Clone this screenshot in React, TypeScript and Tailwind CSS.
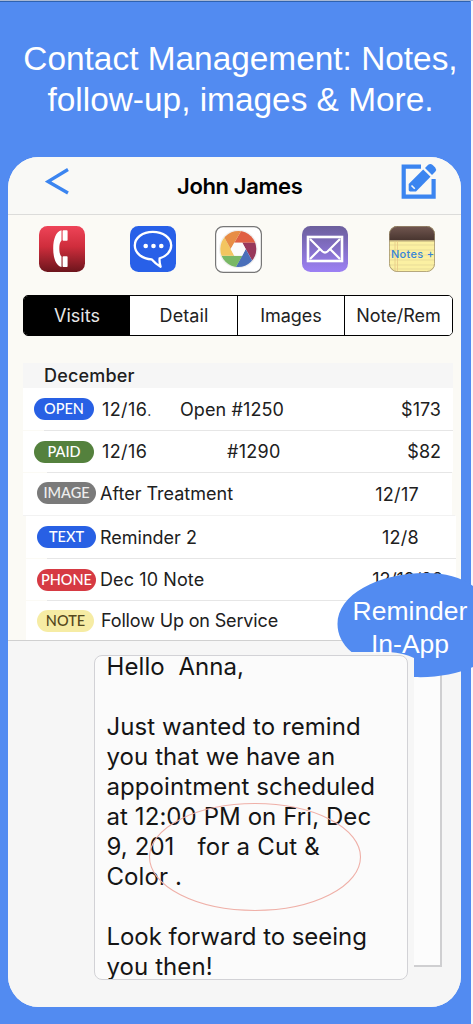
import React from 'react';

const tabs = [
  { label: 'Visits', className: 'w-[106px] bg-black text-[#e8e8e8]' },
  { label: 'Detail', className: 'w-[107px] bg-white pl-px text-[#222] tracking-[0.1px]' },
  { label: 'Images', className: 'w-[107px] bg-white text-[#222] border-l-[1.5px] border-black' },
  { label: 'Note/Rem', className: 'flex-1 bg-white text-[#222] border-l-[1.5px] border-black' },
];

const PhoneIcon = () => (
  <svg width="46" height="46" viewBox="0 0 46 46">
    <defs>
      <linearGradient id="phone" x1="0" y1="0" x2="0" y2="1">
        <stop offset="0" stopColor="#ee4458" />
        <stop offset="0.45" stopColor="#cf2d3c" />
        <stop offset="1" stopColor="#6c151c" />
      </linearGradient>
    </defs>
    <rect width="46" height="46" rx="8.5" fill="url(#phone)" />
    <path d="M22.5 4.2C17 5.5 14.2 13 14.2 22.5S17 39.8 22.5 41V30.5C20.8 29 20.3 26 20.3 22.5S20.8 16 22.5 14.5Z" fill="#fff" />
    <rect x="23.6" y="4.2" width="5" height="10.5" rx="0.8" fill="#fff" />
    <rect x="23.6" y="30.3" width="5" height="10.7" rx="0.8" fill="#fff" />
  </svg>
);

const ChatIcon = () => (
  <svg width="46" height="46" viewBox="0 0 46 46">
    <rect width="46" height="46" rx="8.5" fill="#2860e8" />
    <path
      d="M22.8 5.8C12.6 5.8 4.8 11.8 4.8 19.6S12.5 33 21.6 33.3C24.5 36.7 27.5 39 30.6 40.7C29.6 38 29.4 35 29.6 32.4C36.2 30.6 41.2 25.6 41.2 19.6C41.2 11.8 33 5.8 22.8 5.8Z"
      fill="none"
      stroke="#fff"
      strokeWidth="2.3"
      strokeLinejoin="round"
    />
    <circle cx="15.7" cy="20" r="2.3" fill="#fff" />
    <circle cx="23.5" cy="20" r="2.3" fill="#fff" />
    <circle cx="31.3" cy="20" r="2.3" fill="#fff" />
  </svg>
);

const PhotosIcon = () => (
  <svg width="47" height="47" viewBox="0 0 47 47">
    <defs>
      <clipPath id="wheel">
        <circle cx="23.3" cy="23" r="18" />
      </clipPath>
    </defs>
    <rect x="0.6" y="0.6" width="45.8" height="45.8" rx="7.5" fill="#fff" stroke="#777" strokeWidth="1.2" />
    <circle cx="23.3" cy="23" r="19.3" fill="#f0f0f0" />
    <g clipPath="url(#wheel)">
      <path d="M19.3 16.7L29 0H47V16.7Z" fill="#e05f43" />
      <path d="M27.3 16.7H47V45H43L30.7 23Z" fill="#98385b" />
      <path d="M30.7 23L44 47H17.5Z" fill="#4a6fba" />
      <path d="M27.3 29.7L17.5 47H0V29.7Z" fill="#79b866" />
      <path d="M19.3 29.7H0V0H3L15.7 23Z" fill="#f3c560" />
      <path d="M15.7 23L3 0H29Z" fill="#e78d45" />
      <path d="M19.3 16.7H27.3L30.7 23L27.3 29.7H19.3L15.7 23Z" fill="#fbfafa" />
    </g>
  </svg>
);

const MailIcon = () => (
  <svg width="46" height="46" viewBox="0 0 46 46">
    <defs>
      <linearGradient id="mail" x1="0" y1="0" x2="0" y2="1">
        <stop offset="0" stopColor="#6c5f9c" />
        <stop offset="1" stopColor="#9c80f4" />
      </linearGradient>
    </defs>
    <rect width="46" height="46" rx="8.5" fill="url(#mail)" />
    <rect x="6" y="11" width="34" height="24" fill="none" stroke="#fff" strokeWidth="2.6" />
    <path d="M8 13L20.5 25.5Q23 27.5 25.5 25.5L38 13M8 33L17.5 23.5M38 33L28.5 23.5" fill="none" stroke="#fff" strokeWidth="2.2" />
  </svg>
);

const NotesIcon = () => (
  <div className="relative h-[46px] w-[46px]">
    <svg width="46" height="46" viewBox="0 0 46 46">
      <defs>
        <clipPath id="pad">
          <rect width="46" height="46" rx="8.5" />
        </clipPath>
        <linearGradient id="leather" x1="0" y1="0" x2="0" y2="1">
          <stop offset="0" stopColor="#725750" />
          <stop offset="1" stopColor="#493630" />
        </linearGradient>
      </defs>
      <g clipPath="url(#pad)">
        <rect width="46" height="46" fill="#fbf0a2" />
        <rect width="46" height="14" fill="url(#leather)" />
        <path d="M0 14.7H46" stroke="#b5a477" strokeWidth="1.5" />
        <path d="M0 19H46M0 24H46M0 29H46M0 34H46M0 39H46M0 43H46" stroke="#dcd094" strokeWidth="0.6" />
        <path d="M6 15V46M8.5 15V46" stroke="#e9c887" strokeWidth="0.8" />
      </g>
      <rect x="0.4" y="0.4" width="45.2" height="45.2" rx="8.1" fill="none" stroke="#9b8c6e" strokeWidth="0.8" />
    </svg>
    <span className="absolute left-[2px] top-[21px] whitespace-nowrap text-[11px] font-medium leading-[15px] tracking-[0.3px] text-[#3784d8]">
      Notes +
    </span>
  </div>
);

const Pill = ({ label, className }: { label: string; className: string }) => (
  <span
    className={`flex h-[22px] shrink-0 items-center justify-center rounded-full pt-px font-['Lato',sans-serif] text-[14.5px] font-medium leading-none ${className}`}
  >
    {label}
  </span>
);

const App = () => {
  return (
    <div className="relative h-[1024px] w-[473px] overflow-hidden bg-[linear-gradient(to_right,#528bf1_471px,#f5f7fb_471px)] font-['Inter',sans-serif] text-[#202020]">
      <div className="h-px bg-[#a9b8d3]" />
      <div className="h-px w-[470px] bg-[#2f62b0]" />
      <h1 className="h-[155px] w-[473px] whitespace-nowrap pl-[8px] pt-[37px] text-center font-['Liberation_Sans',sans-serif] text-[33.4px] leading-[40.5px] text-white">
        Contact Management: Notes,
        <br />
        follow-up, images &amp; More.
      </h1>

      <div className="ml-2 h-[850px] w-[453px] overflow-hidden rounded-[31px] bg-[#fbfaf5]">
        <header className="flex h-[58px] border-b border-[#dcdcda] bg-[#f9f9f6]">
          <svg className="ml-[37px] mt-[10px]" width="25" height="30" viewBox="0 0 25 30">
            <path d="M23 2.5L3 14.5L23 26" fill="none" stroke="#3b85f0" strokeWidth="3.3" />
          </svg>
          <span className="ml-[107px] mt-[14px] w-[126px] whitespace-nowrap text-[22px] font-semibold leading-[30px] tracking-[-0.35px] text-black">
            John James
          </span>
          <svg className="ml-[98px] mt-[7px] overflow-visible" width="36" height="36" viewBox="0 0 36 36">
            <path d="M20 2.6H2.7V32.6H32.6V15" fill="none" stroke="#3b85f0" strokeWidth="4.2" />
            <path
              d="M7.7 20L22.2 5.5L29.5 12.8L15 27.4H9.2Q7.7 27.4 7.7 26Z"
              fill="#3b85f0"
            />
            <path d="M24 4L27.2 0.8Q29.3 -1 31.4 0.8L34.2 3.6Q36 5.7 34.2 7.8L31 11Z" fill="#3b85f0" />
            <path d="M10.5 21.5L13.8 24.8" stroke="#f9f9f6" strokeWidth="1.6" />
          </svg>
        </header>

        <div className="flex h-[80px] pl-[31px] pt-[11px]">
          <PhoneIcon />
          <div className="ml-[45px]"><ChatIcon /></div>
          <div className="ml-[39px]"><PhotosIcon /></div>
          <div className="ml-[40px]"><MailIcon /></div>
          <div className="ml-[41px]"><NotesIcon /></div>
        </div>

        <nav className="ml-[15px] flex h-[41px] w-[430px] overflow-hidden rounded-[5px] border-[1.5px] border-black text-[18px]">
          {tabs.map((tab) => (
            <div key={tab.label} className={`flex items-center justify-center ${tab.className}`}>
              {tab.label}
            </div>
          ))}
        </nav>

        <section className="mt-[27px] h-[277px] whitespace-nowrap text-[18px]">
          <h2 className="ml-[15px] flex h-[25px] w-[430px] items-center bg-[#f6f6f6] pl-[21px] font-medium tracking-[0.2px]">December</h2>
          <div className="ml-[15px] flex h-[42px] w-[430px] items-center bg-white pl-[11px] pr-[12px]">
            <Pill label="OPEN" className="w-[60px] bg-[#2860e4] text-white" />
            <span className="ml-[8px] w-[78px] tracking-[0.4px]">12/16<span className="text-[14px]">.</span></span>
            <span className="tracking-[0.1px]">Open #1250</span>
            <span className="ml-auto">$173</span>
          </div>
          <div className="ml-[36px] h-px w-[409px] bg-[#e6e6e6]" />
          <div className="ml-[15px] flex h-[41px] w-[430px] items-center bg-white pl-[11px] pr-[12px]">
            <Pill label="PAID" className="w-[60px] bg-[#54813d] text-white" />
            <span className="ml-[8px] w-[125px] tracking-[0.4px]">12/16</span>
            <span className="tracking-[0.3px]">#1290</span>
            <span className="ml-auto">$82</span>
          </div>
          <div className="ml-[39px] h-px w-[405px] bg-[#e6e6e6]" />
          <div className="ml-[15px] flex h-[42px] w-[429px] items-center bg-white pb-[2px] pl-[14px] pr-[33px]">
            <Pill label="IMAGE" className="w-[59px] bg-[#7a7a7a] text-[#eee]" />
            <span className="ml-[4px]">After Treatment</span>
            <span className="ml-auto pt-[3px] tracking-[0.3px]">12/17</span>
          </div>
          <div className="ml-[15px] h-px w-[432px] bg-[#f2f2f2]" />
          <div className="ml-[18px] flex h-[42px] w-[430px] items-center bg-white pl-[11px] pr-[37px]">
            <Pill label="TEXT" className="w-[59px] bg-[#2860e4] text-white" />
            <span className="ml-[4px]">Reminder 2</span>
            <span className="ml-auto tracking-[0.3px]">12/8</span>
          </div>
          <div className="ml-[39px] h-px w-[409px] bg-[#e6e6e6]" />
          <div className="ml-[18px] flex h-[41px] w-[430px] items-center bg-white pl-[11px] pr-[13px]">
            <Pill label="PHONE" className="w-[59px] bg-[#d63a43] text-white" />
            <span className="ml-[4px] tracking-[0.1px]">Dec 10 Note</span>
            <span className="ml-auto tracking-[-0.2px]">12/10/20</span>
          </div>
          <div className="ml-[39px] h-px w-[409px] bg-[#e6e6e6]" />
          <div className="ml-[18px] flex h-[39px] w-[430px] items-center bg-white pl-[11px]">
            <Pill label="NOTE" className="w-[57px] bg-[#f6eca4] text-[#54481c]" />
            <span className="ml-[7px] tracking-[-0.15px]">Follow Up on Service</span>
          </div>
        </section>

        <section className="flex h-[367px] border-t border-[#d0d0d0] bg-[#f6f6f6] pl-[86px] pt-[14px]">
          <div className="relative h-[325px] w-[314px] shrink-0 overflow-hidden rounded-[8px] border-[1.5px] border-[#d2d2d6] bg-[#fbfbfb] pl-[11.5px] text-[24px] leading-[30px] text-[#151515]">
            <div className="-mt-[4px] whitespace-pre tracking-[0.08px]">
              <p>Hello  Anna,</p>
              <p>&nbsp;</p>
              <p>Just wanted to remind</p>
              <p>you that we have an</p>
              <p>appointment scheduled</p>
              <p>at 12:00 PM on Fri, Dec</p>
              <p>9, 201<span className="ml-[23px] tracking-[0.2px]">for a Cut &amp;</span></p>
              <p>Color .</p>
              <p>&nbsp;</p>
              <p className="tracking-[-0.05px]">Look forward to seeing</p>
              <p>you then!</p>
            </div>
            <svg className="absolute left-[53px] top-[146px]" width="214" height="110" viewBox="0 0 214 110">
              <ellipse cx="107" cy="55" rx="105.5" ry="53.5" fill="none" stroke="#efb0a8" strokeWidth="1.1" />
            </svg>
          </div>
          <div className="ml-[6px] h-[312px] w-[28px] border-b-2 border-r-2 border-[#cfcfd1] bg-[#fcfcfc]" />
        </section>
      </div>

      {/* callout bubble, notched where the message sits in front of it */}
      <div className="absolute left-[337px] top-[572px] h-[106px] w-[136px]">
        <svg className="absolute left-0 top-0" width="136" height="106" viewBox="0 0 136 106">
          <path
            d="M14.5 80C5 72 0.5 62 0.5 52C0.5 23 40 1 89 1C108 1 124 5 136 14V95C120 102 98 106 77 105V86Q67 81 52 80Z"
            fill="#528bf1"
          />
        </svg>
        <p className="absolute left-[6px] top-[23px] w-[134px] whitespace-nowrap text-center font-['Liberation_Sans',sans-serif] text-[26.5px] leading-[32.5px] text-white">
          Reminder
          <br />
          In-App
        </p>
      </div>
    </div>
  );
};

export default App;
